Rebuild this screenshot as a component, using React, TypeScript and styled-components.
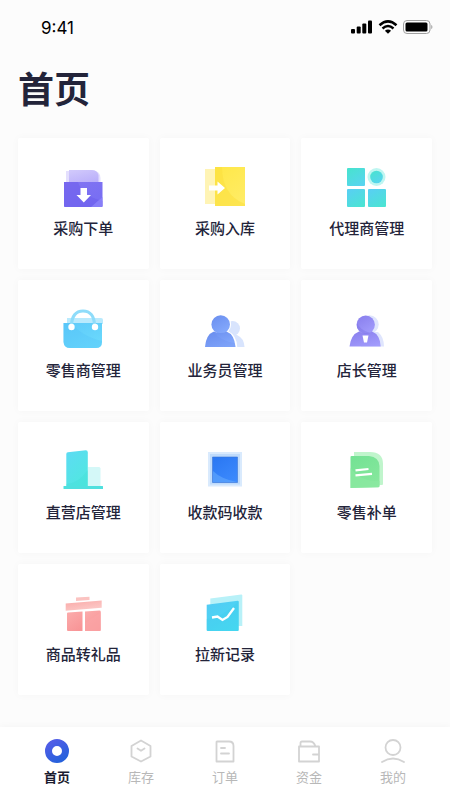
import React from "react";
import styled, { createGlobalStyle } from "styled-components";

const GlobalStyle = createGlobalStyle`
  *, *::before, *::after { box-sizing: border-box; }
  body {
    margin: 0;
    background: #fcfcfc;
    color: #23243a;
    font-family: Inter, "Noto Sans CJK SC", sans-serif;
  }
`;

const Page = styled.div`
  min-height: 100vh;
  display: flex;
  flex-direction: column;
`;

const StatusBar = styled.header`
  display: flex;
  align-items: center;
  justify-content: space-between;
  height: 56px;
  padding: 0 17px 0 41px;
  color: #000;
`;

const Clock = styled.time`
  font-size: 17px;
  font-weight: 400;
  line-height: 20px;
`;

const StatusIcons = styled.div`
  display: flex;
  align-items: center;
  gap: 5px;
  padding-bottom: 3px;

  svg { display: block; }
`;

const Main = styled.main`
  flex: 1;
  padding: 8px 18px 32px;
`;

const Title = styled.h1`
  margin: 0 0 22px;
  font-size: 36px;
  font-weight: 700;
  line-height: 52px;
`;

const Grid = styled.div`
  display: grid;
  grid-template-columns: repeat(3, 1fr);
  grid-auto-rows: 131px;
  gap: 11px;
`;

const Card = styled.button`
  display: flex;
  flex-direction: column;
  align-items: center;
  gap: 7px;
  padding: 26px 0 0;
  border: 0;
  border-radius: 2px;
  background: #fff;
  box-shadow: 0 0 8px rgba(0, 0, 0, 0.03);
  color: inherit;
  font-family: inherit;
  font-size: 15px;
  font-weight: 500;
  line-height: 20px;
  cursor: pointer;

  svg { display: block; }
`;

const TabBar = styled.nav`
  display: grid;
  grid-template-columns: repeat(5, 1fr);
  height: 73px;
  padding: 12px 15px 0;
  background: #fff;
  box-shadow: 0 0 8px rgba(0, 0, 0, 0.04);
`;

const Tab = styled.a<{ $active?: boolean }>`
  display: flex;
  flex-direction: column;
  align-items: center;
  gap: 4px;
  color: ${(p) => (p.$active ? "#1b1c30" : "#b8b8b8")};
  font-size: 13px;
  font-weight: ${(p) => (p.$active ? 700 : 400)};
  line-height: 20px;
  text-decoration: none;

  svg { display: block; }
`;

type GradientProps = { id: string; from: string; to: string };

const Gradient = ({ id, from, to }: GradientProps) => (
  <linearGradient id={id} x1="0.2" y1="0" x2="0.8" y2="1">
    <stop offset="0" stopColor={from} />
    <stop offset="1" stopColor={to} />
  </linearGradient>
);

const Icon = ({ children }: { children: React.ReactNode }) => (
  <svg width="48" height="48" viewBox="0 0 48 48" fill="none" aria-hidden="true">
    {children}
  </svg>
);

const OrderIcon = () => (
  <Icon>
    <defs>
      <Gradient id="order" from="#8174f2" to="#766df3" />
      <Gradient id="orderBack" from="#d0c8fb" to="#b9aefa" />
    </defs>
    <path d="M7 7h28q6 0 6.500 7v5H7z" fill="#e4dffd" />
    <path d="M10 6h23q5 0 6.500 5v8H10z" fill="url(#orderBack)" />
    <path d="M5 18h38.500v24a1 1 0 0 1-1 1H6a1 1 0 0 1-1-1z" fill="url(#order)" />
    <path d="M5 18h14q4 14 24.500 19v5a1 1 0 0 1-1 1H6a1 1 0 0 1-1-1z" fill="#6a5cea" opacity=".45" />
    <path d="M43.500 33v9a1 1 0 0 1-1 1H32z" fill="#8d84fa" opacity=".8" />
    <path d="M21.500 24h6.500v7h4l-7.200 7.500-7.300-7.500h4z" fill="#fff" />
  </Icon>
);

const InboundIcon = () => (
  <Icon>
    <defs><Gradient id="inbound" from="#ffe84a" to="#ffec66" /></defs>
    <path d="M4 5h11v35H4z" fill="#fff4b5" />
    <path d="M14 3h30v39H14z" fill="url(#inbound)" />
    <path d="M14 3h7q0 28 23 37v2H14z" fill="#fcdd3a" opacity=".5" />
    <path d="M8 21.500h8.500v-4l7.500 6.500-7.500 6.500v-4H8z" fill="#fff" />
  </Icon>
);

const AgentIcon = () => (
  <Icon>
    <defs>
      <Gradient id="agent" from="#48e2d0" to="#58d4f0" />
      <Gradient id="agentB" from="#58d0f2" to="#4be4d3" />
    </defs>
    <rect x="4" y="4" width="18" height="18" rx="1" fill="url(#agent)" />
    <rect x="4" y="25" width="18" height="18" rx="1" fill="url(#agentB)" />
    <rect x="25" y="25" width="18" height="18" rx="1" fill="url(#agentB)" />
    <circle cx="33.500" cy="13" r="9" fill="#bff6f1" />
    <circle cx="33.500" cy="13" r="6.300" fill="url(#agent)" />
  </Icon>
);

const RetailerIcon = () => (
  <Icon>
    <defs><Gradient id="bag" from="#5fcbfa" to="#6bdafc" /></defs>
    <path d="M8 12h34a2 2 0 0 1 2 2v4H8z" fill="#b9eafd" />
    <path d="M4.500 17H43v19q0 6-6 6H11q-6 0-6.500-6z" fill="url(#bag)" />
    <path d="M4.500 17H13q9 13 30 18v1q0 6-6 6H11q-6 0-6.500-6z" fill="#4cbdf6" opacity=".25" />
    <path d="M12.500 20C12.500 10 17 5 24 5s11.500 5 11.500 15" stroke="#8edcfa" strokeWidth="3.200" />
    <circle cx="12.500" cy="21" r="3.200" fill="#fff" />
    <circle cx="36" cy="21" r="3.200" fill="#fff" />
  </Icon>
);

const SalesIcon = () => (
  <Icon>
    <defs><Gradient id="sales" from="#6c90f0" to="#86abfd" /></defs>
    <circle cx="31.500" cy="22.500" r="7.500" fill="#d8e4fd" />
    <path d="M25 29h11q7 3 7.500 12H25z" fill="#d8e4fd" />
    <path d="M12 26q-8 4-8.500 15H35q-.5-11-8.500-15z" fill="#fff" stroke="#fff" strokeWidth="2.500" />
    <circle cx="19.700" cy="18.500" r="10.400" fill="#fff" />
    <circle cx="19.700" cy="18.500" r="9.300" fill="url(#sales)" />
    <path d="M13 25.500q-8 3-9 15.500h30.500q-1-12.500-9-15.500-6 3-12.500 0z" fill="url(#sales)" />
    <path d="M12 25.500q7 9.500 22 11.500l.5 4H4q1-12 8-15.500z" fill="#6287ec" opacity=".2" />
  </Icon>
);

const ManagerIcon = () => (
  <Icon>
    <defs><Gradient id="manager" from="#8a80ee" to="#a29cfc" /></defs>
    <g fill="#dfe5fd">
      <circle cx="26.500" cy="18.500" r="9.200" />
      <path d="M18 26h17q6 5 6 14.500H18z" />
    </g>
    <circle cx="22.700" cy="18.700" r="9.200" fill="url(#manager)" />
    <path d="M16 25.500q-8 3-9.500 15h31.200Q37 28.500 29 25.500q-6 3-13 0z" fill="url(#manager)" />
    <path d="M14 17q3 7 13 10-7 3-13-5z" fill="#7067dd" opacity=".3" />
    <path d="M19.500 29.500h6l-1.500 7h-3z" fill="#fff" />
  </Icon>
);

const StoreIcon = () => (
  <Icon>
    <defs><Gradient id="store" from="#5cdcf2" to="#50e8df" /></defs>
    <path d="M29 19h11q1.500 0 1.500 1.500V38H29z" fill="#d4f8f8" />
    <path d="M7.300 6q0-1.500 1.500-1.700l18-2q2 0 2 2V39H7.300z" fill="url(#store)" />
    <path d="M7.300 36Q20 35 28.800 22v17H7.300z" fill="#43dcd7" opacity=".35" />
    <rect x="4.500" y="38" width="39.500" height="3" rx=".5" fill="#4fe0de" />
  </Icon>
);

const QrPayIcon = () => (
  <Icon>
    <defs><Gradient id="qr" from="#2b78f3" to="#3c8afd" /></defs>
    <path d="M7 4h34v34.500H7z" fill="#d9eafd" />
    <path d="M9 6h30v30.500H9z" fill="#bfdbfb" />
    <path d="M11.500 9h25v25.500h-25z" fill="url(#qr)" stroke="#3a76d6" strokeWidth=".6" />
    <path d="M12 23q8 8 24 11H12z" fill="#68adfd" opacity=".55" />
  </Icon>
);

const SupplementIcon = () => (
  <Icon>
    <defs><Gradient id="supplement" from="#74e294" to="#88e89e" /></defs>
    <path d="M11 4h16q13 0 13 12v20q0 1-1 1H11z" fill="#c0f5cc" />
    <path d="M7.500 9q0-1 1-1H26q10 1 10.500 10v20q0 1-1 1.200l-28 .8z" fill="url(#supplement)" />
    <path d="M7.500 20Q18 34 36.500 33v5q0 1-1 1.200l-28 .8z" fill="#8ce9a2" opacity=".6" />
    <path d="M12.500 22.300 25.500 21M12.500 27.300l16.500-1.500" stroke="#fff" strokeWidth="2.200" />
  </Icon>
);

const GiftIcon = () => (
  <Icon>
    <defs>
      <Gradient id="gift" from="#fbaaaa" to="#f89496" />
      <Gradient id="giftLid" from="#faacaa" to="#fccdcb" />
    </defs>
    <path d="m17 7.500 13.500-.8V10L17 11z" fill="#fbc3c1" />
    <path d="m6.700 13.500 36-3v7.300l-36 3z" fill="url(#giftLid)" />
    <path d="M8 23.500q0-1 1-1l14.500-1V41H9q-1 0-1-1z" fill="url(#gift)" />
    <path d="m26 21.500 14.500-.9q1.200 0 1.200 1V40q0 1-1 1H26z" fill="url(#gift)" />
    <path d="M26 33 41.700 22v18q0 1-1 1H26z" fill="#fba4a5" opacity=".7" />
  </Icon>
);

const RecordIcon = () => (
  <Icon>
    <defs><Gradient id="record" from="#52cbf4" to="#4adcf3" /></defs>
    <path d="m9.300 8.500 31-4q1 0 1 1V36h-32z" fill="#b8f1f8" />
    <path d="m5.700 14.700 31-4q1 0 1 1V40q0 1-1 1h-30q-1 0-1-1z" fill="url(#record)" />
    <path d="M5.700 29Q19 29 37.700 11v29q0 1-1 1h-30q-1 0-1-1z" fill="#3bc9eb" opacity=".3" />
    <path d="m11 27.500 5.500-1 5 3.500 5-3 6.500-9" stroke="#fff" strokeWidth="2.300" />
  </Icon>
);

const SignalIcon = () => (
  <svg width="22" height="14" viewBox="0 0 22 14" aria-hidden="true">
    <rect x="0" y="9" width="4" height="4.500" rx="1" />
    <rect x="5.700" y="6.500" width="4" height="7" rx="1" />
    <rect x="11.300" y="3.500" width="4" height="10" rx="1" />
    <rect x="17" y="0.500" width="4" height="13" rx="1" />
  </svg>
);

const WifiIcon = () => (
  <svg width="20" height="14" viewBox="0 0 20 14" aria-hidden="true">
    <path d="M1.500 5.200Q10-2.500 18.500 5.200" fill="none" stroke="#000" strokeWidth="2.500" />
    <path d="M4.500 8.500Q10 3.500 15.500 8.500" fill="none" stroke="#000" strokeWidth="2.400" />
    <path d="M6.900 10.800Q10 8 13.100 10.800L10 13.800z" />
  </svg>
);

const BatteryIcon = () => (
  <svg width="30" height="14" viewBox="0 0 30 14" aria-hidden="true">
    <rect x=".5" y=".5" width="26.500" height="13" rx="3.500" fill="none" stroke="#a0a0a0" />
    <rect x="2.500" y="2.500" width="22" height="9" rx="1.500" />
    <path d="M28.300 4.800q2.200 2 0 4.400z" fill="#999" />
  </svg>
);

const TabIcon = ({ children }: { children: React.ReactNode }) => (
  <svg
    width="24"
    height="24"
    viewBox="0 0 24 24"
    fill="none"
    stroke="#d3d3d3"
    strokeWidth="1.800"
    strokeLinecap="round"
    strokeLinejoin="round"
    aria-hidden="true"
  >
    {children}
  </svg>
);

const HomeTabIcon = () => (
  <TabIcon>
    <defs><Gradient id="home" from="#4f5de6" to="#2761dc" /></defs>
    <circle cx="12" cy="12" r="8.500" stroke="url(#home)" strokeWidth="7" />
  </TabIcon>
);

const StockTabIcon = () => (
  <TabIcon>
    <path d="M12 1.500 21.500 7v10.500L12 22.500 2.500 17.500V7z" />
    <path d="m8.500 9.500 3.500 2.300 3.500-2.300" />
  </TabIcon>
);

const OrdersTabIcon = () => (
  <TabIcon>
    <path d="M4 2.500h12q4.500 0 4.500 4.500v15.500H3.500V3z" />
    <path d="M8 9h4M8 14.500h8" />
  </TabIcon>
);

const FundsTabIcon = () => (
  <TabIcon>
    <path d="M2 7.500h20v15H2zM3.500 7V4Q3.500 2.500 5 2.500h8q4 0 5.500 5M22 15.500h-6" />
  </TabIcon>
);

const ProfileTabIcon = () => (
  <TabIcon>
    <circle cx="12" cy="8.500" r="7.500" />
    <path d="M1 23q11-7 22 0" />
  </TabIcon>
);

const features = [
  { label: "采购下单", Glyph: OrderIcon },
  { label: "采购入库", Glyph: InboundIcon },
  { label: "代理商管理", Glyph: AgentIcon },
  { label: "零售商管理", Glyph: RetailerIcon },
  { label: "业务员管理", Glyph: SalesIcon },
  { label: "店长管理", Glyph: ManagerIcon },
  { label: "直营店管理", Glyph: StoreIcon },
  { label: "收款码收款", Glyph: QrPayIcon },
  { label: "零售补单", Glyph: SupplementIcon },
  { label: "商品转礼品", Glyph: GiftIcon },
  { label: "拉新记录", Glyph: RecordIcon },
];

const tabs = [
  { label: "首页", href: "#home", Glyph: HomeTabIcon, active: true },
  { label: "库存", href: "#stock", Glyph: StockTabIcon },
  { label: "订单", href: "#orders", Glyph: OrdersTabIcon },
  { label: "资金", href: "#funds", Glyph: FundsTabIcon },
  { label: "我的", href: "#profile", Glyph: ProfileTabIcon },
];

export default function App() {
  return (
    <Page lang="zh-CN">
      <GlobalStyle />
      <StatusBar>
        <Clock>9:41</Clock>
        <StatusIcons>
          <SignalIcon />
          <WifiIcon />
          <BatteryIcon />
        </StatusIcons>
      </StatusBar>
      <Main>
        <Title>首页</Title>
        <Grid>
          {features.map(({ label, Glyph }) => (
            <Card key={label} type="button">
              <Glyph />
              <span>{label}</span>
            </Card>
          ))}
        </Grid>
      </Main>
      <TabBar>
        {tabs.map(({ label, href, Glyph, active }) => (
          <Tab key={label} href={href} $active={active} aria-current={active ? "page" : undefined}>
            <Glyph />
            <span>{label}</span>
          </Tab>
        ))}
      </TabBar>
    </Page>
  );
}
